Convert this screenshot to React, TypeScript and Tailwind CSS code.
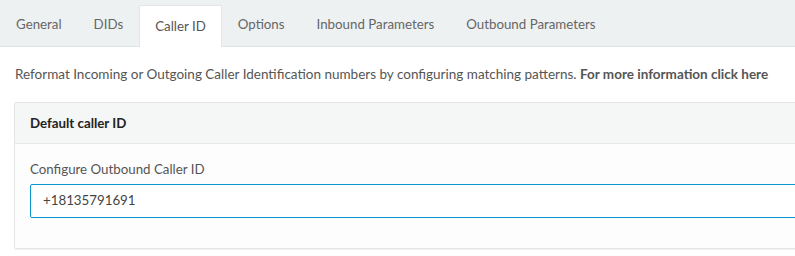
const tabs = ["General", "DIDs", "Caller ID", "Options", "Inbound Parameters", "Outbound Parameters"];

export default function App() {
  return (
    <div className="w-[795px] h-[256px] overflow-hidden bg-white font-['Lato',sans-serif] text-[#555]">
      <div className="flex h-[47px] items-end border-b border-[#dfe3e4] bg-[#eef1f2]">
        {tabs.map((t) => (
          <div
            key={t}
            className={
              t === "Caller ID"
                ? "-mb-px flex h-[42px] items-center rounded-t-[2px] border border-b-0 border-[#e2e6e7] bg-white px-[15px] text-[13.3px] text-[#555]"
                : "flex h-[42px] items-center px-[16px] text-[13.3px] text-[#666]"
            }
          >
            {t}
          </div>
        ))}
      </div>

      <p className="mt-[17px] whitespace-nowrap pl-[15px] text-[13.5px] leading-[20px]">
        Reformat Incoming or Outgoing Caller Identification numbers by configuring matching patterns.{" "}
        <span className="font-bold">For more information click here</span>
      </p>

      <div className="ml-[14px] mt-[18px] w-[800px] rounded-[2px] border border-[#e2e6e7] shadow-[0_1px_1px_rgba(0,0,0,0.06)]">
        <div className="flex h-[41px] items-center border-b border-[#e6e9ea] bg-[#f5f6f6] px-[15px] pt-[1px] text-[13.3px] font-bold text-[#222]">
          Default caller ID
        </div>
        <div className="bg-[#fdfdfd] px-[15px] pt-[15px] pb-[30px]">
          <div className="text-[13.3px] leading-[20px] text-[#555]">Configure Outbound Caller ID</div>
          <div className="mt-[5px] flex h-[34px] items-center rounded-[2px] border border-[#0a97d0] bg-white px-[12px] text-[13.3px] text-[#444]">
            +18135791691
          </div>
        </div>
      </div>
    </div>
  );
}
